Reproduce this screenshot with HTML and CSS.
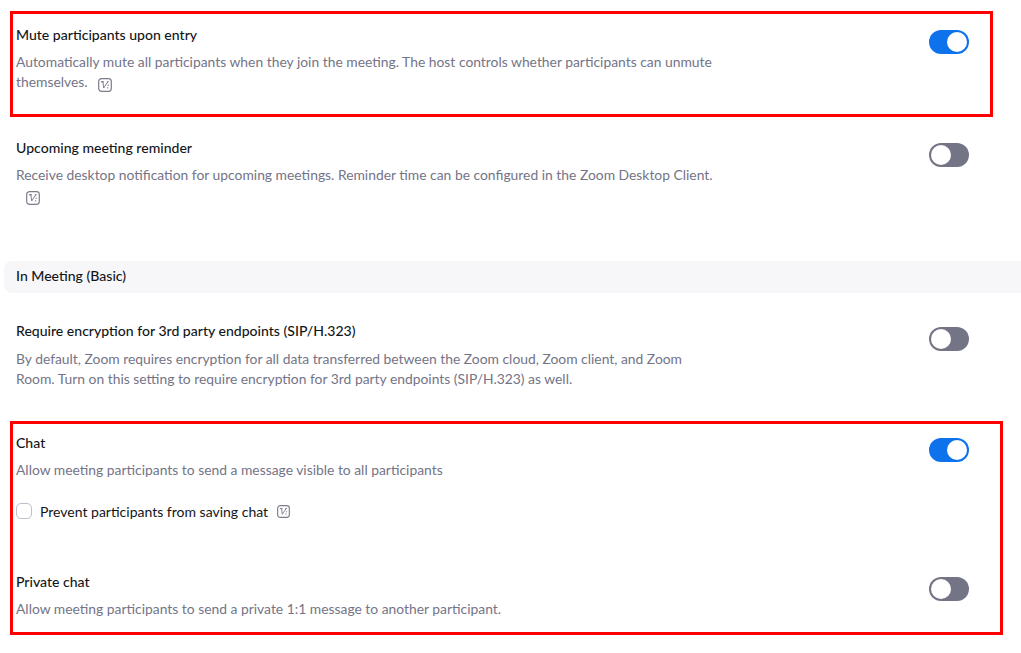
FILE: index.html
```html
<!DOCTYPE html>
<html lang="en">
<head>
<meta charset="utf-8">
<title>Meeting settings</title>
<link rel="stylesheet" href="styles.css">
</head>
<body>
<svg class="defs" width="0" height="0" aria-hidden="true"><defs>
<symbol id="vmark" viewBox="0 0 14 14">
<rect x="0.7" y="0.7" width="12.6" height="12.6" rx="2.8" fill="none" stroke="#7d7d8c" stroke-width="1.2"/>
<path d="M3 3.8H4.9L5.7 10L9.8 3.8M3.4 3.8H6M8.8 3.8H10.8M9.6 7.3h1.3M8.9 9.8h1.3" fill="none" stroke="#747487" stroke-width="0.9"/>
</symbol>
</defs></svg>
<main class="page">
  <section class="row row-mute">
    <div class="text">
      <h3 class="title">Mute participants upon entry</h3>
      <p class="desc">Automatically mute all participants when they join the meeting. The host controls whether participants can unmute themselves. <svg class="vmark vmark-after"><use href="#vmark"/></svg></p>
    </div>
    <span class="toggle on"></span>
  </section>
  <section class="row row-reminder">
    <div class="text">
      <h3 class="title">Upcoming meeting reminder</h3>
      <p class="desc">Receive desktop notification for upcoming meetings. Reminder time can be configured in the Zoom Desktop Client. <svg class="vmark vmark-wrap"><use href="#vmark"/></svg></p>
    </div>
    <span class="toggle"></span>
  </section>
  <h2 class="band">In Meeting (Basic)</h2>
  <section class="row row-encrypt">
    <div class="text">
      <h3 class="title">Require encryption for 3rd party endpoints (SIP/H.323)</h3>
      <p class="desc">By default, Zoom requires encryption for all data transferred between the Zoom cloud, Zoom client, and Zoom Room. Turn on this setting to require encryption for 3rd party endpoints (SIP/H.323) as well.</p>
    </div>
    <span class="toggle"></span>
  </section>
  <section class="row row-chat">
    <div class="text">
      <h3 class="title">Chat</h3>
      <p class="desc">Allow meeting participants to send a message visible to all participants</p>
      <div class="check">
        <span class="box"></span>
        <span class="check-label">Prevent participants from saving chat</span>
        <svg class="vmark vmark-small"><use href="#vmark"/></svg>
      </div>
    </div>
    <span class="toggle on"></span>
  </section>
  <section class="row row-private">
    <div class="text">
      <h3 class="title">Private chat</h3>
      <p class="desc">Allow meeting participants to send a private 1:1 message to another participant.</p>
    </div>
    <span class="toggle"></span>
  </section>
</main>
<div class="mark mark-one"></div>
<div class="mark mark-two"></div>
</body>
</html>
```
FILE: styles.css
```css
* { box-sizing: border-box; }
html, body { margin: 0; padding: 0; background: #fff; }
body { width: 1021px; height: 653px; overflow: hidden; position: relative; font-family: Lato, "Liberation Sans", sans-serif; }
.defs { position: absolute; }
.page { display: flex; flex-direction: column; padding-top: 24px; }
.row { display: flex; justify-content: space-between; align-items: flex-start; padding: 0 52px 0 16px; }
.text { width: 700px; }
.title { margin: 0; font-size: 14.05px; line-height: 22px; font-weight: 500; color: #131619; }
.desc { margin: 6px 0 0; font-size: 13.86px; line-height: 20px; font-weight: 400; color: #747487; }
.toggle { flex: none; width: 40px; height: 24px; margin-top: 6px; border-radius: 12px; background: #747487; position: relative; }
.toggle::after { content: ""; position: absolute; top: 2px; left: 2px; width: 20px; height: 20px; border-radius: 50%; background: #fff; }
.toggle.on { background: #0e72ed; }
.toggle.on::after { left: 18px; }
.vmark { width: 14px; height: 14px; vertical-align: -5px; }
.vmark-after { margin-left: 7px; }
.vmark-wrap { display: block; margin: 6px 0 0 10px; }
.vmark-small { width: 13px; height: 13px; margin-left: 9px; }
.row-mute { height: 113px; }
.row-reminder { height: 124px; }
.band { margin: 0 0 0 4px; height: 32px; padding-left: 12px; font-size: 14.05px; line-height: 30px; font-weight: 500; color: #131619; background: #f7f7fa; border-radius: 8px 0 0 8px; }
.row-encrypt { height: 112px; margin-top: 27px; }
.row-encrypt .toggle { margin-top: 7px; }
.row-encrypt .desc { margin-top: 7px; }
.row-chat { height: 139px; }
.row-private { height: 60px; }
.check { display: flex; align-items: center; margin-top: 20px; height: 22px; }
.box { width: 16px; height: 16px; border: 1px solid #bfbfcc; border-radius: 5px; margin-right: 8px; }
.check-label { font-size: 14px; color: #131619; }
.mark { position: absolute; border: 3px solid #f00; }
.mark-one { left: 10px; top: 11px; width: 983px; height: 106px; }
.mark-two { left: 10px; top: 421px; width: 993px; height: 214px; }
```
